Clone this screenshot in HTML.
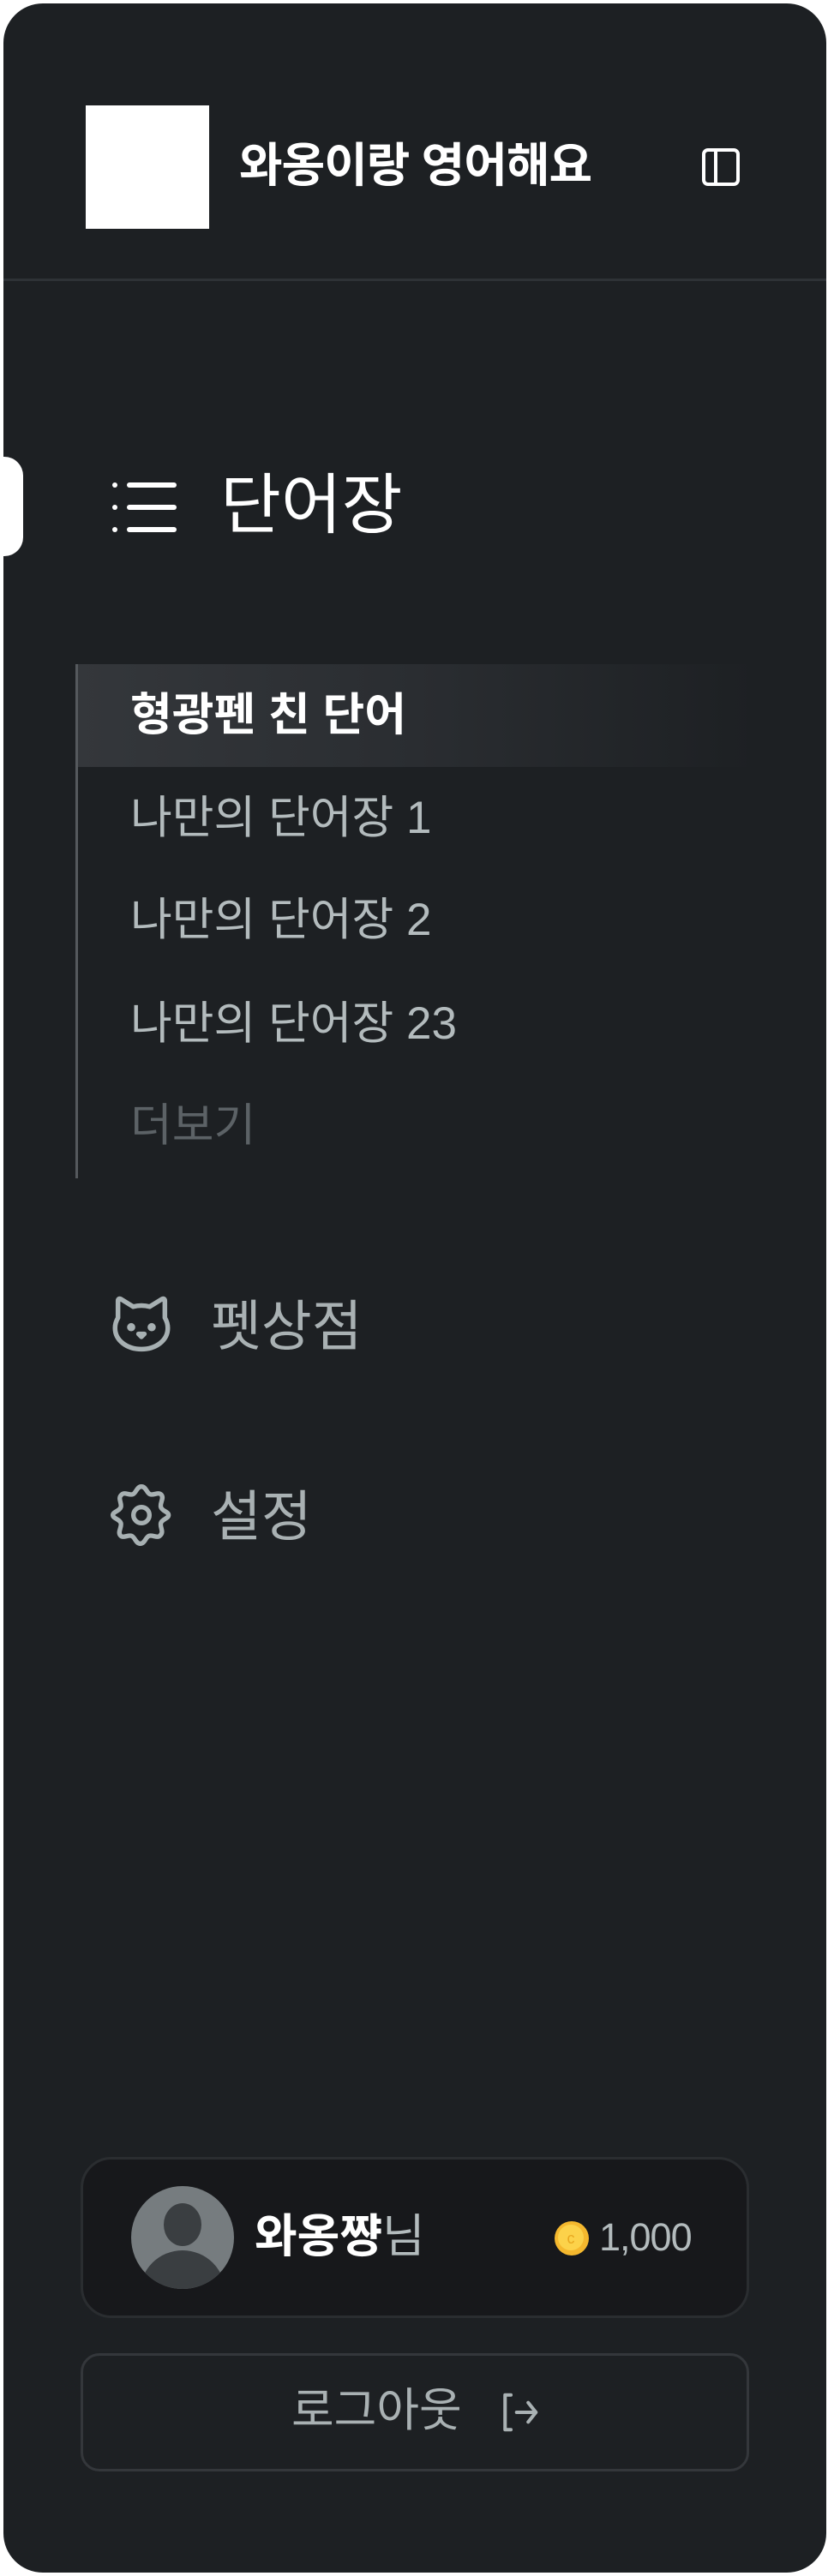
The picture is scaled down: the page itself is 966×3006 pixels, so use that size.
<!DOCTYPE html>
<html><head><meta charset="utf-8"><style>
*{margin:0;padding:0;box-sizing:border-box}
body{width:966px;height:3006px;background:#fff;font-family:"Liberation Sans","Noto Sans CJK KR",sans-serif;position:relative;overflow:hidden}
.panel{position:absolute;left:4px;top:4px;width:960px;height:2998px;background:#1d2023;border-radius:46px}
.a{position:absolute;white-space:nowrap;line-height:1}
.item{position:absolute;left:152px;font-size:53px;color:#b3bbbd;line-height:1}
</style></head><body>
<div class="panel"></div>
<div class="a" style="left:100px;top:123px;width:144px;height:144px;background:#fff"></div>
<div class="a" style="left:279px;top:166px;font-size:55px;font-weight:700;color:#fff;letter-spacing:-1px">와옹이랑 영어해요</div>
<svg class="a" style="left:818px;top:172px" width="46" height="46" viewBox="0 0 46 46"><rect x="3" y="3" width="40" height="40" rx="5" fill="none" stroke="#fff" stroke-width="4"/><line x1="17" y1="3" x2="17" y2="43" stroke="#fff" stroke-width="4"/></svg>
<div class="a" style="left:4px;top:325px;width:960px;height:3px;background:#2e3236"></div>
<div class="a" style="left:0;top:533px;width:27px;height:116px;background:#fff;border-radius:0 22px 22px 0"></div>
<svg class="a" style="left:128px;top:560px" width="84" height="64" viewBox="0 0 84 64"><g fill="#fff"><circle cx="6" cy="6" r="3"/><circle cx="6" cy="32" r="3"/><circle cx="6" cy="58" r="3"/><rect x="20" y="3" width="58" height="6" rx="3"/><rect x="20" y="29" width="58" height="6" rx="3"/><rect x="20" y="55" width="58" height="6" rx="3"/></g></svg>
<div class="a" style="left:257px;top:552px;font-size:77px;color:#fff">단어장</div>
<div class="a" style="left:88px;top:775px;width:3px;height:600px;background:#55595d"></div>
<div class="a" style="left:91px;top:775px;width:790px;height:120px;background:linear-gradient(90deg,#34373b,#2a2d31 50%,rgba(29,32,35,0))"></div>
<div class="item" style="top:808px;color:#fff;font-weight:700">형광펜 친 단어</div>
<div class="item" style="top:928px">나만의 단어장 1</div>
<div class="item" style="top:1047px">나만의 단어장 2</div>
<div class="item" style="top:1168px">나만의 단어장 23</div>
<div class="item" style="top:1287px;color:#5c6266">더보기</div>
<svg class="a" style="left:124px;top:1506px" width="82" height="82" viewBox="0 0 24 24" fill="none" stroke="#a7b0b2" stroke-width="1.6" stroke-linecap="round" stroke-linejoin="round"><path d="M4 3.5c0-.6.5-.9 1-.6l4.2 2.6c1.8-.5 3.8-.5 5.6 0L19 2.9c.5-.3 1 0 1 .6V9.3c.6 1 1 2.2 1 3.5 0 4.2-4 7.2-9 7.2s-9-3-9-7.2c0-1.3.4-2.5 1-3.5z"/><circle cx="8.5" cy="12.5" r=".6" fill="#a7b0b2"/><circle cx="15.5" cy="12.5" r=".6" fill="#a7b0b2"/><path d="M11 14.8h2l-1 1z" fill="#a7b0b2"/></svg>
<div class="a" style="left:246px;top:1516px;font-size:64px;color:#a9b1b3">펫상점</div>
<svg class="a" style="left:125px;top:1727px" width="80" height="82" viewBox="0 0 24 24" fill="none" stroke="#a7b0b2" stroke-width="1.6" stroke-linejoin="round"><path d="M12 2c1.6 0 1.8 2.2 3 2.7 1.3.5 3-1 4 .2 1 1.3-.6 2.8-.2 4.3.4 1.4 2.7 1.6 2.7 2.8s-2.3 1.4-2.7 2.8c-.4 1.5 1.2 3-.2 4.3-1 1.2-2.7-.3-4 .2-1.200.5-1.4 2.7-3 2.7s-1.8-2.2-3-2.7c-1.3-.5-3 1-4-.2-1-1.300.6-2.800.2-4.300C4.4 13.4 2 13.2 2 12s2.4-1.4 2.8-2.8c.4-1.5-1.2-3 .2-4.3 1-1.2 2.7.3 4-.2C10.2 4.2 10.4 2 12 2z"/><circle cx="12" cy="12" r="2.8"/></svg>
<div class="a" style="left:246px;top:1738px;font-size:64px;color:#a9b1b3">설정</div>
<div class="a" style="left:94px;top:2517px;width:780px;height:188px;background:#17181b;border:3px solid #2a2d30;border-radius:36px"></div>
<svg class="a" style="left:153px;top:2551px" width="120" height="120" viewBox="0 0 120 120"><defs><clipPath id="c"><circle cx="60" cy="60" r="60"/></clipPath></defs><circle cx="60" cy="60" r="60" fill="#767c7f"/><g clip-path="url(#c)" fill="#3a3e41"><ellipse cx="60" cy="45" rx="22" ry="25"/><ellipse cx="60" cy="125" rx="50" ry="50"/></g></svg>
<div class="a" style="left:297px;top:2583px;font-size:54px;font-weight:700;color:#fff">와옹쨩<span style="font-weight:400;color:#b3bbbd">님</span></div>
<svg class="a" style="left:646px;top:2591px" width="42" height="42" viewBox="0 0 42 42"><circle cx="21" cy="21" r="20" fill="#f5b82e"/><circle cx="20" cy="20" r="15" fill="#fcd24a"/><text x="20" y="27" font-size="18" text-anchor="middle" fill="#e8a820" font-family="Liberation Sans">c</text></svg>
<div class="a" style="left:699px;top:2588px;font-size:45px;color:#b3bbbd;letter-spacing:-1px">1,000</div>
<div class="a" style="left:94px;top:2746px;width:780px;height:138px;border:3px solid #34373b;border-radius:22px"></div>
<div class="a" style="left:340px;top:2786px;font-size:54px;color:#a9b1b3">로그아웃</div>
<svg class="a" style="left:578px;top:2788px" width="54" height="54" viewBox="0 0 24 24" fill="none" stroke="#a9b1b3" stroke-width="1.8" stroke-linecap="round" stroke-linejoin="round"><path d="M8 3H5v18h3"/><path d="M11 12h10M17 7l4 5-4 5"/></svg>
</body></html>
